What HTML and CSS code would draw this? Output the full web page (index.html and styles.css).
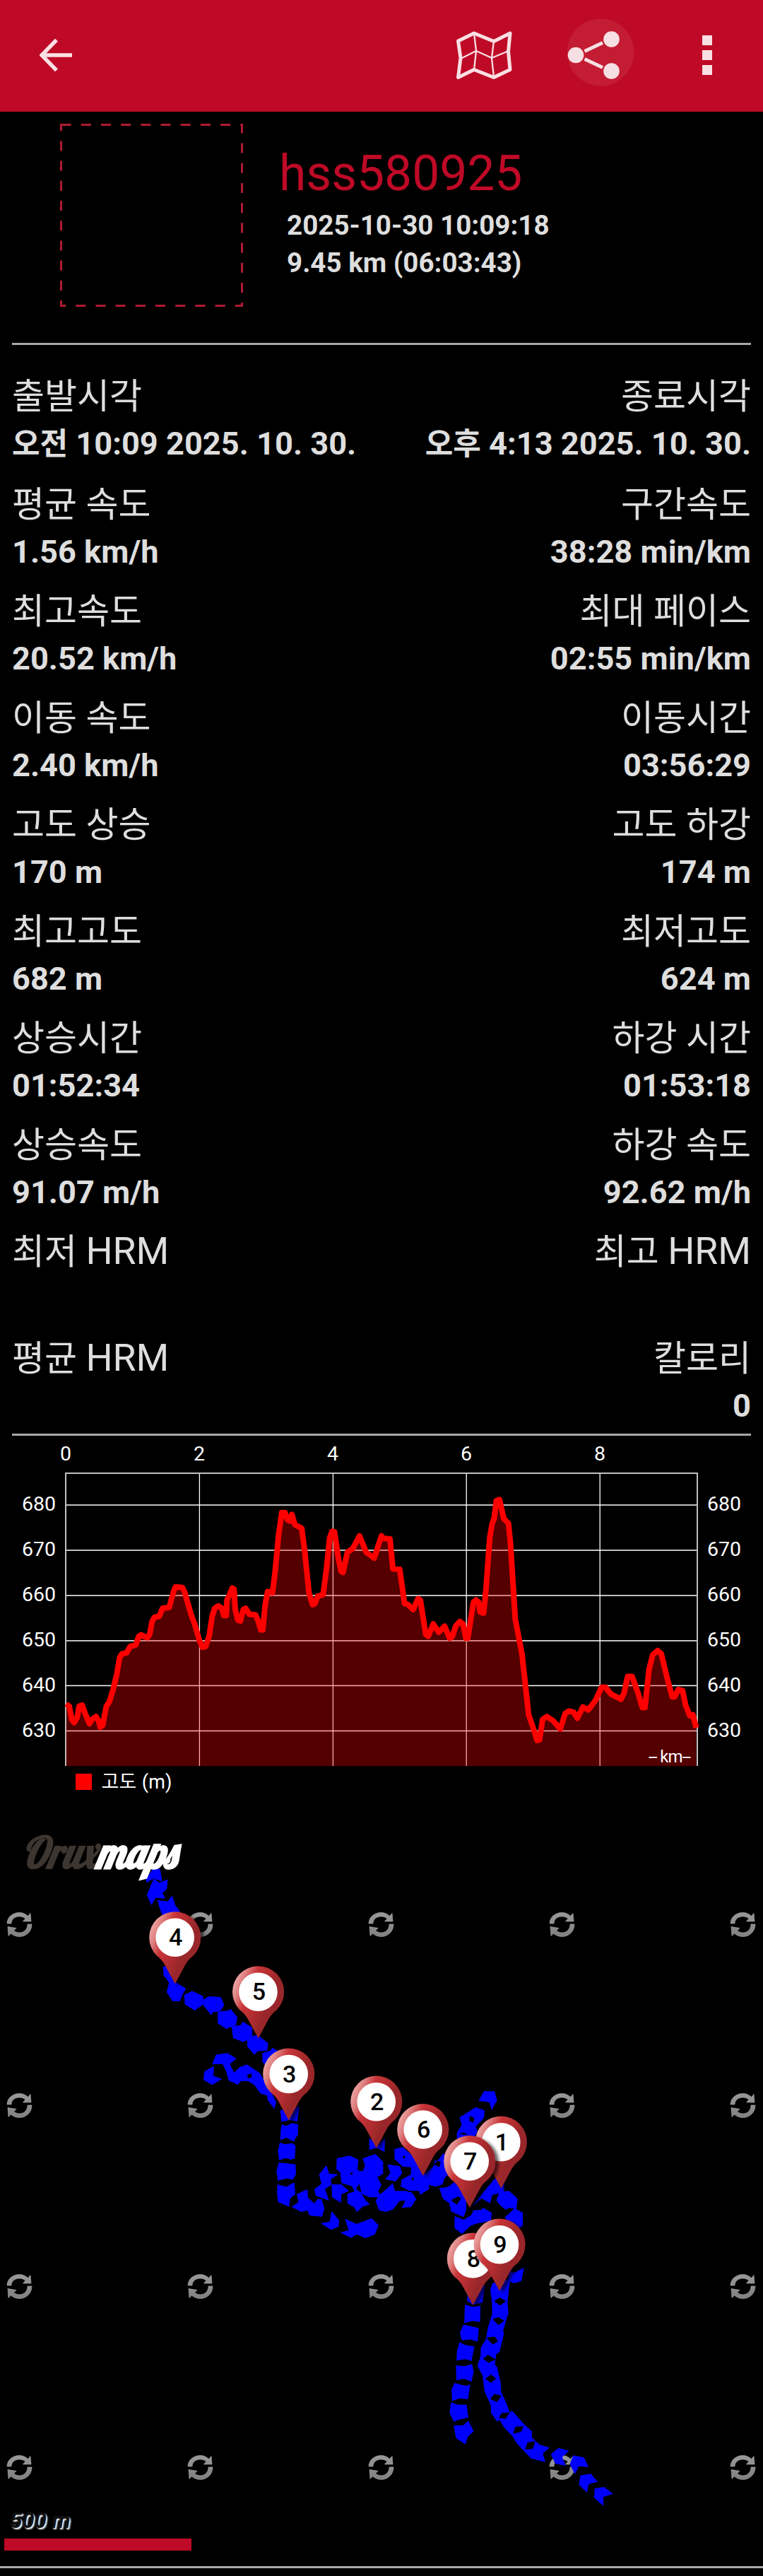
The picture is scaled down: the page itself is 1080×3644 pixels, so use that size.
FILE: index.html
```html
<!DOCTYPE html>
<html lang="ko">
<head>
    <meta charset="UTF-8">
    <meta name="viewport" content="width=device-width, initial-scale=1.0">
    <title>OruxMaps</title>
    <link rel="stylesheet" href="styles.css">
</head>
<body>
    <header class="toolbar">
        <svg class="icon-back" width="47" height="46" viewBox="0 0 47 46">
            <path d="M24 1.500L3 23L24 44.500M3 23H46" fill="none" stroke="#fadfe4" stroke-width="5.500"/>
        </svg>
        <svg class="icon-map" width="79" height="69" viewBox="0 0 79 69">
            <g fill="none" stroke="#fadfe4" stroke-linejoin="round">
                <path d="M2.500 14L25 3L53 14.500L76 3L73.500 29L76 54.500L53 65.500L25 54.500L2.500 65.500L6 38Z" stroke-width="5"/>
                <path d="M25 3L28 28L25 55M53 14L50 38L53 65M6 39L28 28L50 38L74 28" stroke-width="2.300"/>
            </g>
        </svg>
        <svg class="icon-share" width="95" height="104" viewBox="0 0 95 104">
            <circle cx="47" cy="48" r="47.500" fill="#c31c33"/>
            <path d="M24.500 46.500L50 34.500M24.500 57.500L50 69.500" stroke="#f6dfe3" stroke-width="4.800"/>
            <g fill="#f6dfe3">
                <circle cx="12" cy="52" r="11.300"/>
                <circle cx="62.500" cy="29.500" r="11.300"/>
                <circle cx="62.500" cy="74.500" r="11.300"/>
            </g>
        </svg>
        <div class="icon-more"><i></i><i></i><i></i></div>
    </header>

    <section class="summary">
        <svg width="259" height="259" viewBox="0 0 259 259">
            <rect x="1.500" y="1.500" width="256" height="256" fill="none" stroke="#b01a31" stroke-width="3" stroke-dasharray="14.100"/>
        </svg>
        <div class="summary-text">
            <h1>hss580925</h1>
            <p>2025-10-30 10:09:18</p>
            <p>9.45 km (06:03:43)</p>
        </div>
    </section>

    <section class="stats">
        <div class="row first">
            <div class="stat"><span>출발시각</span><b><small>오전</small> 10:09 2025. 10. 30.</b></div>
            <div class="stat"><span>종료시각</span><b><small>오후</small> 4:13 2025. 10. 30.</b></div>
        </div>
        <div class="row">
            <div class="stat"><span>평균 속도</span><b>1.56 km/h</b></div>
            <div class="stat"><span>구간속도</span><b>38:28 min/km</b></div>
        </div>
        <div class="row">
            <div class="stat"><span>최고속도</span><b>20.52 km/h</b></div>
            <div class="stat"><span>최대 페이스</span><b>02:55 min/km</b></div>
        </div>
        <div class="row">
            <div class="stat"><span>이동 속도</span><b>2.40 km/h</b></div>
            <div class="stat"><span>이동시간</span><b>03:56:29</b></div>
        </div>
        <div class="row">
            <div class="stat"><span>고도 상승</span><b>170 m</b></div>
            <div class="stat"><span>고도 하강</span><b>174 m</b></div>
        </div>
        <div class="row">
            <div class="stat"><span>최고고도</span><b>682 m</b></div>
            <div class="stat"><span>최저고도</span><b>624 m</b></div>
        </div>
        <div class="row">
            <div class="stat"><span>상승시간</span><b>01:52:34</b></div>
            <div class="stat"><span>하강 시간</span><b>01:53:18</b></div>
        </div>
        <div class="row">
            <div class="stat"><span>상승속도</span><b>91.07 m/h</b></div>
            <div class="stat"><span>하강 속도</span><b>92.62 m/h</b></div>
        </div>
        <div class="row">
            <div class="stat"><span>최저 <em>HRM</em></span><b></b></div>
            <div class="stat"><span>최고 <em>HRM</em></span><b></b></div>
        </div>
        <div class="row">
            <div class="stat"><span>평균 <em>HRM</em></span><b></b></div>
            <div class="stat"><span>칼로리</span><b>0</b></div>
        </div>
    </section>

    <svg class="chart" width="1080" height="529" viewBox="0 0 1080 529">
        <g class="grid">
            <path d="M93 98H987M93 162H987M93 226H987M93 290H987M93 353.500H987M93 417.500H987"/>
            <path d="M282.400 53V467M471.400 53V467M660.200 53V467M849.200 53V467"/>
            <path d="M93 467V53H987V467" class="frame"/>
        </g>
        <!-- altitude profile, area and line share the same points -->
        <g id="profile" transform="translate(0 -1) scale(.34436 .33806)"></g>
        <g class="axis" text-anchor="middle">
            <text x="93" y="35">0</text>
            <text x="282" y="35">2</text>
            <text x="471" y="35">4</text>
            <text x="660" y="35">6</text>
            <text x="849" y="35">8</text>
        </g>
        <g class="axis" text-anchor="end">
            <text x="79" y="106">680</text>
            <text x="79" y="170">670</text>
            <text x="79" y="234">660</text>
            <text x="79" y="298">650</text>
            <text x="79" y="361.500">640</text>
            <text x="79" y="425.500">630</text>
        </g>
        <g class="axis">
            <text x="1001" y="106">680</text>
            <text x="1001" y="170">670</text>
            <text x="1001" y="234">660</text>
            <text x="1001" y="298">650</text>
            <text x="1001" y="361.500">640</text>
            <text x="1001" y="425.500">630</text>
        </g>
        <text x="918" y="462" class="unit" textLength="60">-- km--</text>
        <rect x="107" y="478" width="23" height="23" fill="#f00"/>
        <text x="143.500" y="499" class="legend" textLength="100">고도 (m)</text>
    </svg>

    <div class="map">
        <svg width="1080" height="1070" viewBox="0 0 1080 1070">
            <defs>
                <linearGradient id="pinFill" x1="0" y1=".25" x2=".8" y2=".7">
                    <stop offset="0" stop-color="#f0aaaa"/>
                    <stop offset=".16" stop-color="#de8080"/>
                    <stop offset=".36" stop-color="#c83438"/>
                    <stop offset=".6" stop-color="#b22d30"/>
                    <stop offset=".8" stop-color="#992829"/>
                </linearGradient>
                <linearGradient id="reloadFill" x1="0" y1="-17" x2="0" y2="17" gradientUnits="userSpaceOnUse">
                    <stop offset="0" stop-color="#999"/>
                    <stop offset="1" stop-color="#808080"/>
                </linearGradient>
                <filter id="shadow" x="-30%" y="-30%" width="170%" height="170%">
                    <feDropShadow dx="5" dy="3" stdDeviation="2" flood-color="#000" flood-opacity=".6"/>
                </filter>
                <g id="reload" fill="url(#reloadFill)" stroke="#b0b0b0" stroke-width=".6">
                    <path d="M-17.500 -1.500C-17.500 -10 -10 -17 0 -17C5 -17 9 -15 12 -12L15.500 -16L16.500 -4.500L5 -4.500L8.500 -8.500C6 -10.500 3.500 -11.500 0 -11.500C-6.500 -11.500 -11.500 -7.500 -11.500 -1.500Z"/>
                    <path d="M17.500 -.5C17.500 9.500 10 17 0 17C-5 17 -9 15 -12 12.500L-15.500 16L-16.500 3L-4.500 5L-8 8.500C-6 10.500 -3 11.500 0 11.500C6.500 11.500 11.500 7 11.500 -.5Z"/>
                </g>
                <g id="pin">
                    <path d="M0 0L-14 -26Q-18 -34 -26 -40A36.500 36.500 0 1 1 26 -40Q18 -34 14 -26Z" fill="url(#pinFill)" filter="url(#shadow)"/>
                    <circle cx="0" cy="-65.500" r="27.300" fill="#fff"/>
                </g>
            </defs>
            <g id="tiles"></g>
            <g class="track">
                <g transform="scale(.34436)">
                    <path d="M628 243L658 243L667 295L632 283L602 300L600 285Z"/>
                    <path d="M632 283L655 300L690 286L686 325L668 343L680 365L640 362L622 393L604 350L620 310Z"/>
                    <path d="M646 372L690 376L708 352L720 392L738 415L735 470L665 430Z"/>
                    <path d="M670 645L690 640L725 710L765 735L750 760L740 787L710 787L685 750L695 710L672 680Z"/>
                    <path d="M757 760L790 745L835 765L836 800L800 825L760 800Z"/>
                    <path d="M836 780L860 766L908 770L922 803L905 828L875 832L870 845L836 805Z"/>
                    <path d="M895 830L940 825L948 818L976 853L970 885L930 900L895 878Z"/>
                    <path d="M952 890L990 885L997 870L1037 895L1037 935L1000 955L958 938Z"/>
                    <path d="M1016 935L1060 925L1103 960L1098 990L1060 992L1045 1006L1016 972Z"/>
                    <path d="M1078 1000L1110 990L1120 978L1150 995L1150 1050L1100 1060L1078 1035Z"/>
                    <path d="M888 1006L935 1000L972 1022L945 1045L962 1080L985 1057L1015 1046L1068 1082L1085 1110L1095 1140L1110 1150L1135 1200L1128 1230L1100 1192L1098 1175L1070 1165L1045 1130L1020 1115L990 1115L978 1130L940 1113L930 1075L915 1045L872 1046ZM1015 1090L1035 1083L1033 1100L1020 1103Z"/>
                    <path d="M880 1052L877 1093L913 1106L873 1130L836 1110L840 1075Z"/>
                </g>
                <g transform="translate(380 340) scale(.33333)">
                    <path d="M50 255L132 240L122 303L90 297L55 305Z"/>
                    <path d="M57 315L75 322L100 310L126 315L125 360L112 378L112 388L100 385L75 372L50 383L52 340Z"/>
                    <path d="M48 392L70 400L100 395L115 405L112 460L95 465L75 458L45 468L40 430Z"/>
                    <path d="M43 478L75 480L115 485L117 525L105 550L75 545L40 555L34 515Z"/>
                    <path d="M38 570L75 580L110 562L114 612L92 630L88 665L40 645L36 605Z"/>
                    <path d="M120 612L165 590L168 628L195 650L208 632L225 632L238 672L228 707L175 703L165 680L140 687L98 665L128 645Z"/>
                    <path d="M268 683L300 722L298 750L265 763L222 735L260 728Z"/>
                    <path d="M325 716L375 738L438 714L468 743L452 782L412 799L375 782L350 797L305 775L340 765Z"/>
                    <path d="M246 488L258 525L297 527L265 548L268 572L240 590L258 640L200 618L195 590L225 568L215 528Z"/>
                    <path d="M268 570L310 570L342 598L310 612L308 648L270 625Z"/>
                    <path d="M290 460L345 448L382 465L378 510L400 515L410 490L400 460L455 441L487 475L487 525L463 540L480 572L465 600L475 612L500 590L528 565L537 598L585 598L610 605L628 632L605 667L565 670L582 640L558 640L530 675L500 687L470 680L455 640L465 625L430 625L395 610L415 640L430 655L400 665L375 688L365 668L335 650L335 610L365 600L355 578L310 565L305 520L288 505ZM345 525L358 515L355 530ZM372 590L385 568L395 605Z"/>
                    <path d="M505 485L558 493L568 522L540 558L495 548L518 522Z"/>
                    <path d="M428 375L445 385L455 410L495 375L493 432L458 415L428 425Z"/>
                    <path d="M535 420L570 412L620 455L655 530L690 505L745 435L770 520L745 548L740 570L710 580L682 572L682 590L643 615L640 598L600 598L562 580L565 550L605 528L605 497L570 495L535 462ZM570 450L580 450L580 460L572 460ZM605 545L618 540L614 555ZM705 465L732 475L725 497L703 485Z"/>
                    <path d="M892 215L915 175L960 175L971 212L948 255L938 222Z"/>
                    <path d="M812 285L880 243L918 256L915 288L880 325L888 345L875 370L800 375L800 350L820 320ZM855 280L875 288L870 308L853 300ZM805 357L830 350L848 360Z"/>
                    <path d="M725 585L760 582L790 560L815 590L840 640L840 680L828 709L775 685L768 650L740 630ZM775 637L805 622L818 628L800 657Z"/>
                    <path d="M790 705L830 720L862 700L870 680L905 678L910 668L948 690L945 725L890 735L860 745L822 780L790 755Z"/>
                    <path d="M862 665L960 545L1003 565L1000 600L1022 598L1058 630L1053 675L1022 670L1008 678L985 660L968 638L978 608L950 615L942 650L905 630Z"/>
                    <path d="M1003 710L1045 672L1080 690L1080 745L1060 760L1030 745Z"/>
                </g>
                <g transform="translate(540 680) scale(.34436 .33333)">
                    <path d="M355 -20L425 -25L415 52L375 60L352 45Z"/>
                    <path d="M343 60L375 70L407 65L405 135L375 130L340 138Z"/>
                    <path d="M337 145L370 152L400 160L395 218L365 208L330 212L322 180Z"/>
                    <path d="M320 220L345 232L382 238L370 300L345 292L308 298L310 260Z"/>
                    <path d="M306 318L340 322L372 312L379 345L370 388L340 375L308 382Z"/>
                    <path d="M300 393L345 405L365 400L355 462L320 458L290 470L288 420Z"/>
                    <path d="M285 475L315 485L350 485L357 540L320 548L297 557L280 520Z"/>
                    <path d="M297 573L335 572L357 553L379 598L355 620L345 653L306 627Z"/>
                    <path d="M455 -30L447 0L453 40L455 100L437 160L428 210L408 243L407 280L394 320L415 360L424 430L450 490L450 520L475 557L485 550L505 583L537 617L557 650L615 713L674 729L663 692L691 667L650 655L618 625L618 598L585 567L537 511L527 518L516 485L492 430L490 390L475 325L466 315L472 270L485 262L503 185L500 170L522 95L518 50L523 0L530 -50ZM463 46L485 30L512 46L487 64ZM457 122L480 113L505 130L480 147ZM430 200L465 196L479 215L458 230ZM418 290L437 273L470 293L440 307ZM427 375L450 357L471 374L450 392ZM447 462L463 440L494 446L475 473ZM482 540L495 520L527 518L510 545ZM541 608L550 578L583 576L575 600ZM591 675L600 645L632 640L622 673Z"/>
                    <path d="M525 -85L545 -75L586 -97L575 -40L545 -30L520 -40Z"/>
                    <path d="M696 695L727 669L771 680L743 708L757 744L714 735Z"/>
                    <path d="M774 738L788 700L832 709L851 750L811 746L795 780Z"/>
                    <path d="M812 825L817 785L860 778L889 812L852 822L845 858Z"/>
                    <path d="M874 880L876 841L915 834L951 863L912 877L912 915Z"/>
                </g>
            </g>
            <g id="pins" class="pins"></g>
            <text x="31" y="83" textLength="219" lengthAdjust="spacingAndGlyphs" class="logo">Orux<tspan>maps</tspan></text>
        </svg>
        <div class="scale">
            <span>500 m</span>
            <div class="scale-bar"></div>
        </div>
    </div>

    <script>
        const profile = '272,1125 285,1135 295,1190 305,1203 318,1180 325,1135 338,1130 350,1165 368,1208 378,1190 395,1178 405,1195 412,1222 422,1215 437,1135 450,1115 465,1065 480,1000 492,930 502,915 520,912 535,885 558,878 570,843 580,836 605,848 615,835 625,780 635,762 655,758 668,725 695,722 715,650 722,635 750,638 760,660 785,750 800,790 820,860 832,888 845,885 860,840 872,760 882,725 898,715 912,725 920,755 930,755 933,690 945,665 955,640 962,645 967,730 978,775 988,778 1000,730 1010,725 1025,750 1050,752 1062,780 1072,815 1080,815 1090,710 1100,655 1120,660 1130,580 1145,420 1158,325 1172,325 1182,355 1192,360 1200,332 1212,375 1240,390 1252,480 1270,660 1285,710 1295,705 1305,675 1328,668 1342,560 1355,430 1365,403 1375,405 1390,510 1402,570 1410,575 1428,490 1450,475 1478,422 1505,490 1538,515 1568,422 '
            + '1573,432 1603,435 1615,560 1643,562 1663,705 1678,710 1698,730 1718,685 1728,690 1750,835 1760,842 1781,790 1803,825 1828,800 1838,825 1848,850 1858,845 1873,800 1890,780 1903,790 1915,850 1923,850 1946,700 1956,690 1968,700 1973,740 1988,745 1998,640 2013,430 2023,370 2031,350 2040,275 2053,270 2071,350 2090,370 2098,450 2118,770 2146,920 2173,1170 2193,1230 2208,1278 2218,1275 2230,1190 2248,1178 2273,1195 2303,1230 2323,1165 2338,1155 2358,1160 2373,1185 2396,1138 2418,1150 2448,1110 2473,1055 2488,1055 2513,1085 2553,1105 2565,1080 2580,1010 2598,1010 2623,1080 2640,1140 2651,1140 2668,980 2683,920 2703,902 2718,915 2743,1020 2763,1095 2773,1095 2788,1065 2806,1070 2818,1130 2836,1175 2848,1170 2862,1225';
        document.getElementById('profile').innerHTML =
            `<polygon class="area" points="272,1385 ${profile} 2862,1385"/><polyline class="line" points="${profile}"/>`;

        // placeholder icon in the middle of every map tile
        let tiles = '';
        for (let y = 162.5; y < 1000; y += 256) {
            for (let x = 27.5; x < 1080; x += 256) {
                tiles += `<use href="#reload" x="${x}" y="${y}"/>`;
            }
        }
        document.getElementById('tiles').innerHTML = tiles;

        // waypoints: label, tip x, tip y
        const pins = [
            [1, 709.3, 535.7], [2, 532.7, 478.7], [3, 408.7, 439.5], [4, 247.7, 246.3], [5, 365.5, 323.3],
            [6, 598.7, 518], [7, 664.7, 563], [8, 669.3, 700.7], [9, 707, 680.7]
        ];
        document.getElementById('pins').innerHTML = pins.map(([n, x, y]) =>
            `<g transform="translate(${x} ${y})"><use href="#pin"/><text x="1" y="-54">${n}</text></g>`
        ).join('');
    </script>
</body>
</html>
```
FILE: styles.css
```css
* {
    box-sizing: border-box;
}

body {
    margin: 0;
    background-color: #000;
    color: #dedede;
    font-family: Roboto, "Noto Sans CJK KR", sans-serif;
}

svg {
    display: block;
}

.toolbar {
    display: flex;
    align-items: center;
    height: 158px;
    padding: 0 72px 2px 56px;
    background-color: #be0a26;
}

.icon-map {
    margin-left: auto;
}

.icon-share {
    margin-left: 78px;
}

.icon-more {
    display: flex;
    flex-direction: column;
    gap: 7px;
    margin-left: 96px;
}

.icon-more i {
    width: 14px;
    height: 14px;
    background-color: #f8dfe4;
}

.summary {
    display: flex;
    height: 330px;
    margin: 0 17px;
    padding: 17px 0 0 68px;
    border-bottom: 3px solid #a8a8a8;
}

.summary-text {
    padding: 29px 0 0 51px;
}

.summary h1 {
    margin: 0 0 4px;
    font-size: 69.5px;
    font-weight: 400;
    line-height: 84px;
    color: #be0a26;
}

.summary p {
    margin: 0;
    padding-left: 11px;
    font-size: 38.6px;
    font-weight: 700;
    line-height: 53px;
}

.stats {
    height: 1543px;
    margin: 0 17px;
    padding-top: 33px;
    border-bottom: 3px solid #a8a8a8;
}

.row {
    display: flex;
    justify-content: space-between;
    height: 151px;
}

.row.first {
    height: 153px;
}

.stat {
    display: flex;
    flex-direction: column;
}

.stat:last-child {
    text-align: right;
}

.stat span {
    height: 74px;
    font-size: 50px;
    line-height: 80px;
}

.stat em {
    font-size: 53.5px;
    font-style: normal;
    line-height: 1;
}

.stat b {
    height: 74px;
    font-size: 45.2px;
    font-weight: 700;
    line-height: 66px;
}

.stat small {
    font-size: 43px;
    line-height: 1;
}

.grid path {
    fill: none;
    stroke: #fff;
    stroke-width: 1.3;
}

.grid .frame {
    stroke: #c0c0c0;
    stroke-width: 2;
}

.area {
    fill: rgba(255, 0, 0, 0.33);
}

.line {
    fill: none;
    stroke: #f00;
    stroke-width: 8;
    stroke-linejoin: round;
    vector-effect: non-scaling-stroke;
}

.axis {
    font-size: 28.5px;
    fill: #fff;
}

.unit {
    font-size: 24px;
    fill: #fff;
}

.legend {
    font-size: 27px;
    fill: #fff;
}

.map {
    position: relative;
    height: 1084px;
}

.map > svg {
    border-bottom: 3px solid #a8a8a8;
    height: 1073px;
}

.track {
    fill: #00f;
    fill-rule: evenodd;
}

.pins {
    font-size: 34px;
    font-weight: 500;
    text-anchor: middle;
    fill: #000;
}

.logo {
    font-family: Lobster, "Liberation Serif", serif;
    font-size: 62px;
    font-style: italic;
    font-weight: 700;
    fill: #3d3530;
}

.logo tspan {
    fill: #fff;
    stroke: #fff;
    stroke-width: 1;
}

/* scale lies over the bottom left corner of the map */
.scale {
    position: absolute;
    left: 6px;
    bottom: 36px;
}

.scale span {
    display: block;
    padding: 0 0 7px 8px;
    font-size: 31px;
    font-style: italic;
    font-weight: 700;
    line-height: 36px;
    color: #111;
    text-shadow: 2px 2px 2px #fff;
}

.scale-bar {
    width: 265px;
    height: 17px;
    background-color: #be0a26;
}
```
